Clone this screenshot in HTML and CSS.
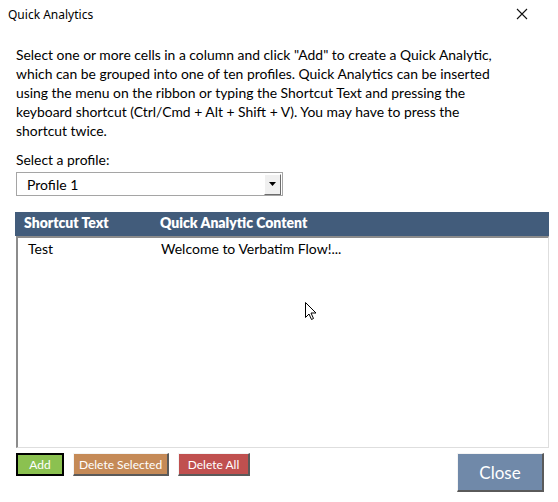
FILE: index.html
```html
<!DOCTYPE html>
<html>
<head>
<meta charset="utf-8">
<link rel="stylesheet" href="styles.css">
</head>
<body>
<div class="dialog">
  <div class="titlebar">
    <span class="title">Quick Analytics</span>
    <svg class="close-x" width="12" height="12" viewBox="0 0 12 12"><path d="M1 1 L11 11 M11 1 L1 11" stroke="#111" stroke-width="1.1" fill="none"/></svg>
  </div>
  <div class="content">
    <p class="intro">Select one or more cells in a column and click "Add" to create a Quick Analytic,<br>which can be grouped into one of ten profiles. Quick Analytics can be inserted<br>using the menu on the ribbon or typing the Shortcut Text and pressing the<br>keyboard shortcut (Ctrl/Cmd + Alt + Shift + V). You may have to press the<br>shortcut twice.</p>
    <div class="label">Select a profile:</div>
    <div class="select">
      <span class="select-value">Profile 1</span>
      <span class="select-btn"><svg width="7" height="4" viewBox="0 0 7 4"><path d="M0 0 H7 L3.5 4 Z" fill="#000"/></svg></span>
    </div>
    <div class="table">
      <div class="thead">
        <span class="col1">Shortcut Text</span>
        <span class="col2">Quick Analytic Content</span>
      </div>
      <div class="tbody">
        <div class="row">
          <span class="col1">Test</span>
          <span class="col2">Welcome to Verbatim Flow!...</span>
        </div>
      </div>
    </div>
    <div class="actions">
      <div class="left-actions">
        <button class="btn btn-add">Add</button>
        <button class="btn btn-delsel">Delete Selected</button>
        <button class="btn btn-delall">Delete All</button>
      </div>
      <button class="btn btn-close">Close</button>
    </div>
  </div>
  <svg class="cursor" width="12" height="19" viewBox="0 0 12 19"><path d="M0.5 0.5 V15.5 L4 12 L6.5 17.5 L8.5 16.5 L6 11 H11 Z" fill="#fff" stroke="#000" stroke-width="1" stroke-linejoin="miter"/></svg>
</div>
</body>
</html>
```
FILE: styles.css
```css
html, body {
  margin: 0;
  padding: 0;
  background: #fff;
}
.dialog {
  position: relative;
  width: 558px;
  height: 502px;
  background: #fff;
  font-family: Lato, "Liberation Sans", sans-serif;
  color: #000;
}
.titlebar {
  height: 30px;
  display: flex;
  align-items: center;
  justify-content: space-between;
  padding: 0 30px 0 8px;
  font-family: "Noto Sans", "Open Sans", sans-serif;
  font-size: 12px;
}
.title {
  position: relative;
  top: -1px;
}
.close-x {
  position: relative;
  top: -1px;
}
.content {
  padding: 15px 9px 0 16px;
}
.intro {
  margin: 0;
  font-size: 13.9px;
  line-height: 19px;
  white-space: nowrap;
}
.label {
  margin-top: 10px;
  font-size: 13.9px;
  line-height: 19px;
}
.select {
  margin-top: 3px;
  width: 265px;
  height: 22px;
  border: 1px solid #a5a5a5;
  display: flex;
  align-items: center;
  justify-content: space-between;
  box-sizing: content-box;
}
.select-value {
  padding-left: 10px;
  font-size: 14px;
}
.select-btn {
  width: 15px;
  height: 19px;
  margin-right: 1px;
  background: #f0f0f0;
  border-right: 1px solid #6d6d6d;
  border-bottom: 1px solid #6d6d6d;
  border-top: 1px solid #fff;
  border-left: 1px solid #fff;
  display: flex;
  align-items: center;
  justify-content: center;
}
.table {
  margin-top: 16px;
  width: 534px;
  margin-left: -1px;
}
.thead {
  height: 24px;
  box-sizing: border-box;
  padding-bottom: 3px;
  background: #425c7b;
  color: #fff;
  font-weight: 800;
  font-size: 14px;
  display: flex;
  align-items: center;
}
.thead .col1 {
  width: 136px;
  padding-left: 9px;
}
.tbody {
  height: 209px;
  margin-left: 1px;
  width: 530px;
  border-top: 2px solid #8c8c8c;
  border-left: 2px solid #8c8c8c;
  border-right: 1px solid #dedede;
  border-bottom: 1px solid #dedede;
  background: #fff;
}
.row {
  display: flex;
  height: 20px;
  align-items: center;
  font-size: 14px;
}
.row .col1 {
  width: 133px;
  padding-left: 10px;
}
.actions {
  display: flex;
  justify-content: space-between;
  align-items: flex-start;
  margin-top: 5px;
  width: 528px;
}
.left-actions {
  display: flex;
  gap: 9px;
}
.btn {
  font-family: Lato, "Liberation Sans", sans-serif;
  font-size: 12px;
  color: #fff;
  height: 23px;
  padding: 0;
  white-space: nowrap;
  text-align: center;
  border-style: solid;
  border-width: 1px 2px 2px 1px;
  border-color: #f4f4f4 #5a5a5a #5a5a5a #f4f4f4;
  box-sizing: border-box;
  line-height: 19px;
  margin: 0;
}
.btn-add {
  width: 48px;
  background: #8bc150;
  border: 2px solid #000;
}
.btn-delsel {
  width: 96px;
  background: #c58a57;
}
.btn-delall {
  width: 72px;
  background: #c0504f;
}
.btn-close {
  width: 87px;
  height: 39px;
  font-size: 17px;
  background: #7089a9;
}
.cursor {
  position: absolute;
  left: 305px;
  top: 302px;
}
```
